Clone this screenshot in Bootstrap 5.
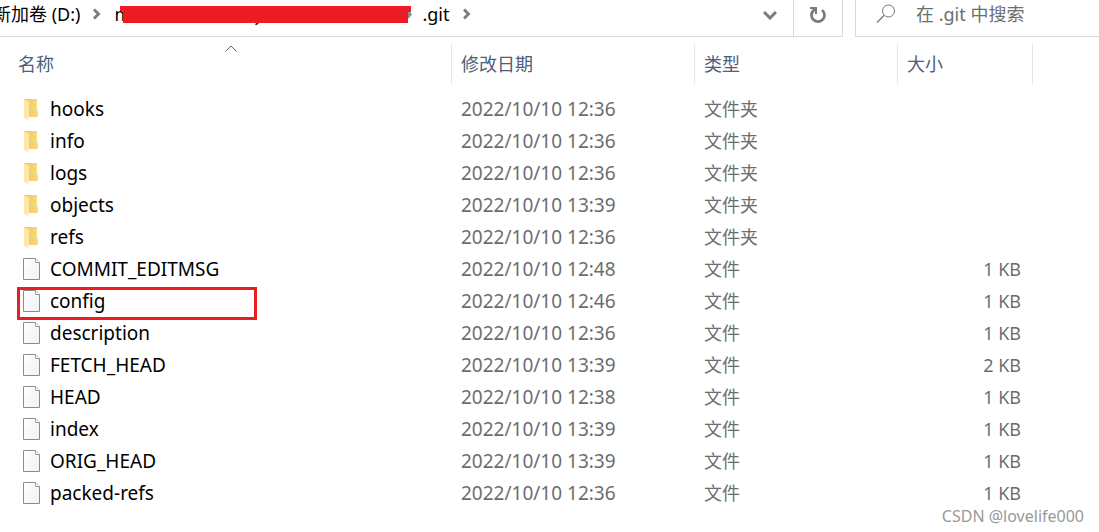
<!DOCTYPE html>
<html lang="zh-CN">
<head>
<meta charset="utf-8">
<meta name="viewport" content="width=device-width, initial-scale=1">
<title>.git</title>
<link href="https://cdn.jsdelivr.net/npm/bootstrap@5.3.0/dist/css/bootstrap.min.css" rel="stylesheet">
<style>
  body { font: 18px/24px "Noto Sans", "Noto Sans CJK SC", sans-serif; color: #000; background: #fff; overflow-x: hidden; }
  svg { display: block; flex: none; }
  .topbar { height: 37px; }
  .address, .search { border-bottom: 1px solid #d9d9d9; }
  .crumbs { font-size: 18px; gap: 13px; margin-left: -7px; padding-bottom: 8px; }
  .crumbs a { color: #000; text-decoration: none; white-space: nowrap; }
  .hidden-path { width: 295px; height: 24px; }
  .redaction { left: 6px; top: 4px; }
  .tool { border: 0; background: none; padding: 0 0 7px; display: flex; align-items: center; justify-content: center; width: 46px; }
  .refresh { border: solid #d9d9d9; border-width: 0 1px 1px; width: 50px; }
  .search { width: 244px; border-left: 1px solid #d9d9d9; margin-left: 12px; padding: 0 0 8px 20px; gap: 20px; }
  .search input { border: 0; outline: 0; padding: 0; min-width: 0; line-height: 24px; color: #6d6d6d; background: none; }
  .search input::placeholder { color: #6d6d6d; opacity: 1; }
  .files { width: 100%; table-layout: fixed; border-collapse: separate; border-spacing: 0; margin-top: 7px; }
  .files th { height: 40px; font-weight: 400; color: #4c607a; border-right: 1px solid #e5e5e5; padding: 0 0 0 9px; position: relative; }
  .files th:first-child { padding-left: 18px; }
  .files th:last-child { border: 0; }
  .files td { height: 32px; padding: 0 0 0 9px; color: #6d6d6d; white-space: nowrap; }
  .files td:first-child { padding-left: 17px; color: #000; font-size: 19px; }
  .files td:nth-child(2) { font-size: 19px; }
  .files td:nth-child(4) { text-align: right; padding-right: 12px; }
  .spacer td { height: 9px !important; }
  .col-date { width: 243px; } .col-type { width: 203px; } .col-size { width: 135px; } .col-rest { width: 66px; }
  .sort { left: 225px; top: 1px; }
  .entry { display: flex; align-items: center; gap: 10px; width: 240px; height: 32px; padding-left: 6px; position: relative; }
  .marked::after { content: ""; position: absolute; inset: 2px 0 -3px; border: 3px solid #ed1c24; }
  .watermark { right: 15px; bottom: 4px; font: 16px/24px "Noto Sans", sans-serif; color: #999; }
</style>
</head>
<body>
<svg width="0" height="0" class="position-absolute" aria-hidden="true">
  <defs>
    <linearGradient id="back"><stop offset="0" stop-color="#e9c469"/><stop offset="1" stop-color="#fadc7c"/></linearGradient>
    <linearGradient id="sheet" x2="1" y2="1"><stop offset="0" stop-color="#fff"/><stop offset="1" stop-color="#eff1f3"/></linearGradient>
    <symbol id="folder" viewBox="0 0 17 22"><path d="M1 1h13v11l1 1v6H4z" fill="url(#back)"/><path d="M1 1l5 3v15h-1v3l-4-2z" fill="#ffe9a5"/></symbol>
    <symbol id="file" viewBox="0 0 17 22"><path d="M.5.5h12l4 4v17H.5z" fill="url(#sheet)" stroke="#8c8c8c"/><path d="M12.500.5v4h4" fill="#fff" stroke="#999"/></symbol>
    <symbol id="next" viewBox="0 0 8 12"><path d="M1 1.500l4.500 4.500L1 10.500" fill="none" stroke="#7b7b7b" stroke-width="2.800"/></symbol>
  </defs>
</svg>
<header class="topbar d-flex">
  <div class="address d-flex flex-grow-1 overflow-hidden">
    <nav class="crumbs d-flex align-items-center flex-grow-1" aria-label="路径">
      <a href="#">新加卷 (D:)</a>
      <svg width="8" height="12"><use href="#next"/></svg>
      <div class="hidden-path position-relative"><a href="#">m</a>
        <svg class="redaction position-absolute" width="292" height="20"><path d="M288 6h2l2 2-2 3-2 2z" fill="#8b8b8b"/><path d="M136 17h3l-2 2h-2z" fill="#333"/><path d="M0 0h291v6h-3v11H3V5H0z" fill="#ed1c24"/></svg>
      </div>
      <a href="#">.git</a>
      <svg width="8" height="12"><use href="#next"/></svg>
    </nav>
    <button class="tool" type="button" aria-label="历史记录"><svg width="14" height="10"><path d="M1 2l6 6 6-6" fill="none" stroke="#7b7b7b" stroke-width="3"/></svg></button>
  </div>
  <button class="tool refresh" type="button" aria-label="刷新"><svg width="18" height="18" viewBox="0 0 18 18"><path d="M13 4A6.500 6.500 0 1 1 4 5L6 3" fill="none" stroke="#7b7b7b" stroke-width="2.800"/><path d="M1 2h6v6" fill="none" stroke="#7b7b7b" stroke-width="2"/></svg></button>
  <div class="search d-flex align-items-center">
    <svg width="20" height="20" viewBox="0 0 20 20"><circle cx="12.500" cy="7" r="6" fill="none" stroke="#777"/><path d="M8 11.500L1 18.500" stroke="#777" stroke-width="1.300"/></svg>
    <input type="text" placeholder="在 .git 中搜索" aria-label="在 .git 中搜索">
  </div>
</header>
<main>
  <table class="files">
    <colgroup><col><col class="col-date"><col class="col-type"><col class="col-size"><col class="col-rest"></colgroup>
    <thead><tr>
      <th scope="col">名称<svg class="sort position-absolute" width="12" height="7"><path d="M.5 6.500l5.500-5.500 5.500 5.500" fill="none" stroke="#666"/></svg></th>
      <th scope="col">修改日期</th><th scope="col">类型</th><th scope="col">大小</th><th></th>
    </tr></thead>
    <tbody id="rows"><tr class="spacer"><td colspan="5"></td></tr></tbody>
  </table>
</main>
<div class="watermark position-absolute">CSDN @lovelife000</div>
<script src="https://cdn.jsdelivr.net/npm/bootstrap@5.3.0/dist/js/bootstrap.bundle.min.js"></script>
<script>
  const entries = [
    ['hooks', '12:36'], ['info', '12:36'], ['logs', '12:36'], ['objects', '13:39'], ['refs', '12:36'],
    ['COMMIT_EDITMSG', '12:48', 1], ['config', '12:46', 1], ['description', '12:36', 1], ['FETCH_HEAD', '13:39', 2],
    ['HEAD', '12:38', 1], ['index', '13:39', 1], ['ORIG_HEAD', '13:39', 1], ['packed-refs', '12:36', 1]
  ];
  document.getElementById('rows').insertAdjacentHTML('beforeend', entries.map(([name, time, size]) => `
    <tr><td><div class="entry${name === 'config' ? ' marked' : ''}"><svg width="17" height="22"><use href="#${size ? 'file' : 'folder'}"/></svg><span>${name}</span></div></td>
    <td>2022/10/10 ${time}</td><td>${size ? '文件' : '文件夹'}</td><td>${size ? size + ' KB' : ''}</td><td></td></tr>`).join(''));
</script>
</body>
</html>
